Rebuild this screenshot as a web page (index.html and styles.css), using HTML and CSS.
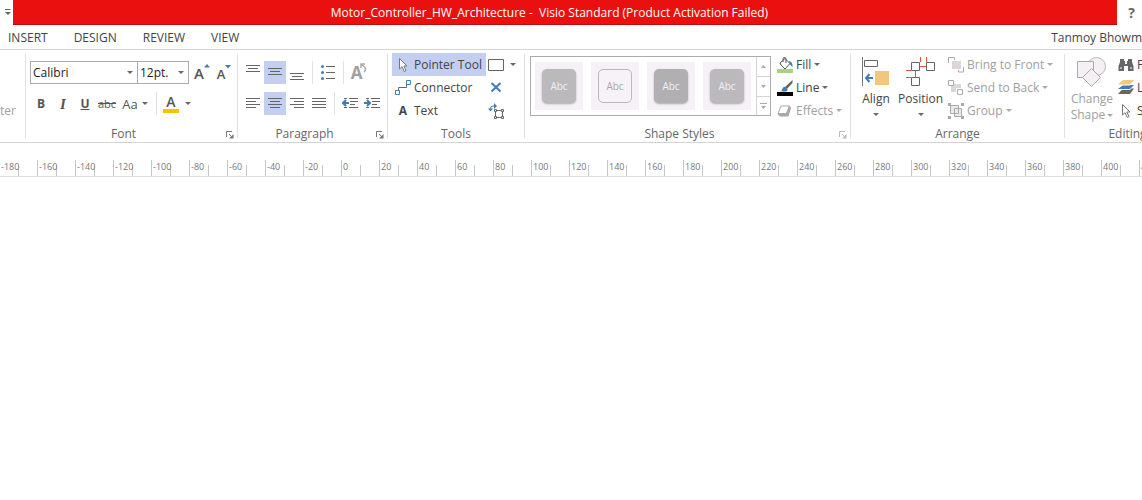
FILE: index.html
```html
<!DOCTYPE html>
<html lang="en">
<head>
<meta charset="utf-8">
<title>Motor_Controller_HW_Architecture - Visio Standard</title>
<link rel="stylesheet" href="styles.css">
</head>
<body>
<header class="titlebar">
  <button class="quick" aria-label="Customize Quick Access Toolbar"><svg width="6" height="7" viewBox="0 0 6 7"><path d="M0 .5h5.500" stroke="#666"/><path d="M0 3h6L3 6z" fill="#666"/></svg></button>
  <h1 class="title">Motor_Controller_HW_Architecture - &nbsp;Visio Standard (Product Activation Failed)</h1>
  <button class="help" aria-label="Help">?</button>
</header>
<nav class="tabs">
  <a href="#insert">INSERT</a><a href="#design">DESIGN</a><a href="#review">REVIEW</a><a href="#view">VIEW</a>
  <span class="user">Tanmoy Bhowm</span>
</nav>
<main>
<div class="ribbon">
  <section class="group clipboard"><button class="painter" disabled>ter</button></section>

  <section class="group font">
    <div class="rows">
      <div class="row">
        <span class="combo family"><select aria-label="Font"><option>Calibri</option></select></span>
        <span class="combo size"><select aria-label="Font size"><option>12pt.</option></select></span>
        <button class="ico letter" aria-label="Grow font">A<svg class="mark" width="6" height="4" viewBox="0 0 6 4"><path d="M0 3.500L3 0l3 3.500z" fill="#3f7cb8"/></svg></button>
        <button class="ico letter small" aria-label="Shrink font">A<svg class="mark" width="6" height="4" viewBox="0 0 6 4"><path d="M0 0h6L3 3.500z" fill="#3f7cb8"/></svg></button>
      </div>
      <div class="row">
        <button class="ico"><b>B</b></button>
        <button class="ico serif"><i>I</i></button>
        <button class="ico"><u>U</u></button>
        <button class="ico strike"><s>abc</s></button>
        <button class="ico case caret">Aa</button>
        <span class="sep"></span>
        <button class="ico color caret" aria-label="Font color"><span class="swatch">A</span></button>
      </div>
    </div>
    <footer><span>Font</span><button class="launch" aria-label="Font settings"><svg width="8" height="8" viewBox="0 0 8 8"><path d="M.5 6V.5H6M3 3l3 3" fill="none" stroke="#777"/><path d="M7.500 3v4.500H3z" fill="#777"/></svg></button></footer>
  </section>

  <section class="group paragraph">
    <div class="rows">
      <div class="row">
        <button class="ico" aria-label="Align top"><svg width="14" height="17"><path d="M0 1.500h14M2 4.500h10M0 7.500h14" stroke="#666"/></svg></button>
        <button class="ico on" aria-label="Align middle"><svg width="14" height="17"><path d="M0 4.500h14M2 7.500h10M0 10.500h14" stroke="#666"/></svg></button>
        <button class="ico" aria-label="Align bottom"><svg width="14" height="17"><path d="M0 9.500h14M2 12.500h10M0 15.500h14" stroke="#666"/></svg></button>
        <span class="sep"></span>
        <button class="ico" aria-label="Bullets"><svg width="14" height="17"><path d="M5 2.500h9M5 8.500h9M5 14.500h9" stroke="#666"/><g fill="#3f7cb8"><circle cx="1.500" cy="2.500" r="1.500"/><circle cx="1.500" cy="8.500" r="1.500"/><circle cx="1.500" cy="14.500" r="1.500"/></g></svg></button>
        <span class="sep"></span>
        <button class="ico rotate" aria-label="Rotate text" disabled>A<svg width="7" height="10" viewBox="0 0 7 10"><path d="M1 5V1h4M1 1l3 2.500q3 2.500 0 5.500" fill="none" stroke="#aaa" stroke-width="1.500"/></svg></button>
      </div>
      <div class="row">
        <button class="ico" aria-label="Align left"><svg width="14" height="13"><path d="M0 1.500h14M0 4.500h10M0 7.500h14M0 10.500h10" stroke="#666"/></svg></button>
        <button class="ico on" aria-label="Center"><svg width="14" height="13"><path d="M0 1.500h14M2 4.500h10M0 7.500h14M2 10.500h10" stroke="#666"/></svg></button>
        <button class="ico" aria-label="Align right"><svg width="14" height="13"><path d="M0 1.500h14M4 4.500h10M0 7.500h14M4 10.500h10" stroke="#666"/></svg></button>
        <button class="ico" aria-label="Justify"><svg width="14" height="13"><path d="M0 1.500h14M0 4.500h14M0 7.500h14M0 10.500h14" stroke="#666"/></svg></button>
        <span class="sep"></span>
        <button class="ico" aria-label="Decrease indent"><svg width="16" height="13"><path d="M2 1.500h3m2 0h9M8 4.500h8M8 7.500h5M2 10.500h3m2 0h9" stroke="#666"/><path d="M7 6H2M4 3L1 6l3 3" fill="none" stroke="#3f7cb8" stroke-width="2"/></svg></button>
        <button class="ico" aria-label="Increase indent"><svg width="16" height="13"><path d="M2 1.500h3m2 0h9M8 4.500h8M8 7.500h5M2 10.500h3m2 0h9" stroke="#666"/><path d="M0 6h5M3 3l3 3-3 3" fill="none" stroke="#3f7cb8" stroke-width="2"/></svg></button>
      </div>
    </div>
    <footer><span>Paragraph</span><button class="launch" aria-label="Paragraph settings"><svg width="8" height="8" viewBox="0 0 8 8"><path d="M.5 6V.5H6M3 3l3 3" fill="none" stroke="#777"/><path d="M7.500 3v4.500H3z" fill="#777"/></svg></button></footer>
  </section>

  <section class="group tools">
    <div class="cols">
      <div class="stack main">
        <button class="cmd on"><svg width="16" height="16"><path d="M4.500 1.500v10.500l2.500-2.300 2.200 4.800 1.800-.9-2.200-4.600h3.200z" fill="#fff" stroke="#777"/></svg>Pointer Tool</button>
        <button class="cmd"><svg width="16" height="16"><path d="M3.500 10V7.500h8V4" fill="none" stroke="#666"/><path d="M.5 10.500h4v4h-4zM11.500.5h4v4h-4z" fill="#fff" stroke="#3f7cb8"/></svg>Connector</button>
        <button class="cmd"><span class="textglyph">A</span>Text</button>
      </div>
      <div class="stack side">
        <button class="cmd caret" aria-label="Rectangle"><svg width="17" height="16"><path d="M.5 2.500h15v11H.5z" fill="#fff" stroke="#666"/></svg></button>
        <button class="cmd" aria-label="Connection point"><svg width="16" height="16"><path d="M3.500 3l9 8.500M12.500 3l-9 8.500" stroke="#3f7cb8" stroke-width="2"/></svg></button>
        <button class="cmd" aria-label="Text block"><svg width="17" height="16"><path d="M2.500 7V5.500q0-2.500 2.500-2.500h2" fill="none" stroke="#3f7cb8"/><path d="M6 0l3 3-3 3zM0 5.500h5L2.500 8.500z" fill="#3f7cb8"/><path d="M7.500 7.500h7v7h-7z" fill="none" stroke="#666"/><path d="M6.500 6.500h2v2h-2zM13.500 6.500h2v2h-2zM6.500 13.500h2v2h-2zM13.500 13.500h2v2h-2z" fill="#fff" stroke="#666"/></svg></button>
      </div>
    </div>
    <footer><span>Tools</span></footer>
  </section>

  <section class="group styles">
    <div class="cols">
      <div class="gallery">
        <button class="tile"><span class="shape">Abc</span></button>
        <button class="tile"><span class="shape outline">Abc</span></button>
        <button class="tile"><span class="shape dark">Abc</span></button>
        <button class="tile"><span class="shape">Abc</span></button>
        <div class="scroller">
          <button aria-label="Previous row"><svg width="5" height="3"><path d="M0 3L2.500 0 5 3z" fill="#aaa"/></svg></button>
          <button aria-label="Next row"><svg width="5" height="3"><path d="M0 0h5L2.500 3z" fill="#aaa"/></svg></button>
          <button aria-label="More styles"><svg width="7" height="6"><path d="M0 .5h7" stroke="#aaa"/><path d="M1 3h5L3.500 6z" fill="#aaa"/></svg></button>
        </div>
      </div>
      <div class="stack">
        <button class="cmd caret"><svg width="16" height="16"><path d="M0 12h16v4H0z" fill="#a9d18e"/><path d="M3 6l5-4.500 5 5L8 12 4 8z" fill="#fff" stroke="#555"/><path d="M6 5V1.500q0-1 1.500-1T9 2v4" fill="none" stroke="#555"/><path d="M12 4q4 1 3.500 6l-3-3z" fill="#3f7cb8"/></svg>Fill</button>
        <button class="cmd caret"><svg width="16" height="16"><path d="M0 12h16v4H0z"/><path d="M15.500 0v3L10 9 8 7z" fill="#666"/><path d="M3 11.500q2-.5 2.500-3 1-2.500 3-1.500l2 2.500q0 2-3 2z" fill="#3f7cb8"/></svg>Line</button>
        <button class="cmd caret" disabled><svg width="16" height="16"><path d="M4 3h8.500L9.500 10.500H1z" fill="#fff" stroke="#aaa" stroke-linejoin="round"/><path d="M12.500 3l1 2.500L11 13l-1.500-2.500zM1 10.500L2.500 13H11L9.500 10.500z" fill="#aaa" stroke="#aaa" stroke-linejoin="round"/></svg>Effects</button>
      </div>
    </div>
    <footer><span>Shape Styles</span><button class="launch" aria-label="Shape settings" disabled><svg width="8" height="8" viewBox="0 0 8 8"><path d="M.5 6V.5H6M3 3l3 3" fill="none" stroke="#bbb"/><path d="M7.500 3v4.500H3z" fill="#bbb"/></svg></button></footer>
  </section>

  <section class="group arrange">
    <div class="cols">
      <button class="big align caret"><svg width="28" height="30"><path d="M.5 0v29" stroke="#777"/><path d="M2.500 3.500h13v6h-13z" fill="#fff" stroke="#666"/><path d="M13 14h14v14H13z" fill="#f0c77c"/><path d="M11 21H4M7.500 17L4 21l3.500 4" fill="none" stroke="#3f7cb8" stroke-width="2"/></svg>Align</button>
      <button class="big position caret"><svg width="30" height="30"><path d="M14.500 0v5M20.500 0v5M0 13.500h5M0 20.500h5M9.500 10v6M14 9.500h6" stroke="#d8573a"/><path d="M5.500 5.500h8v8h-8zM20.500 5.500h8v8h-8zM5.500 20.500h8v8h-8z" fill="#fff" stroke="#666"/><path d="M14 9.500h6M9.500 14v6" stroke="#d8573a"/></svg>Position</button>
      <div class="stack">
        <button class="cmd caret" disabled><svg width="16" height="16"><path d="M4 4h9v8H4z" fill="#dcd5dc"/><path d="M.5 6V.5h6V3M15.500 10v5h-5v-2" fill="none" stroke="#aaa"/></svg>Bring to Front</button>
        <button class="cmd caret" disabled><svg width="16" height="16"><path d="M3 4h5v5H3zM8 4h5v4H8zM3 9h5v3H3z" fill="#dcd5dc"/><path d="M.5.5h5v5h-5zM9.500 9.500h5v5h-5z" fill="#fff" stroke="#aaa"/></svg>Send to Back</button>
        <button class="cmd caret" disabled><svg width="16" height="16"><path d="M2.500 2.500h8v8h-8zM6.500 5.500h7v8h-7z" fill="#eee8ee" stroke="#aaa"/><path d="M0 0h3v3H0zM13 0h3v3h-3zM0 13h3v3H0zM13 13h3v3h-3z" fill="#aaa"/></svg>Group</button>
      </div>
    </div>
    <footer><span>Arrange</span></footer>
  </section>

  <section class="group editing">
    <div class="cols">
      <button class="big change" disabled><svg width="30" height="30"><circle cx="19.500" cy="9.500" r="9" fill="#f4f0f4" stroke="#bbb"/><path d="M.5 4.500h16v16H.5z" fill="#f4f0f4" stroke="#aaa"/><path d="M14.500 11.500l9 9-9 9-9-9z" fill="#f4f0f4" stroke="#aaa"/></svg><span>Change</span><span class="caret">Shape</span></button>
      <div class="stack">
        <button class="cmd"><svg width="16" height="16"><path d="M2 2h4v2h1v3h2V4h1V2h4v3l1.500 4v5H10V9H6v5H.5V9L2 5z" fill="#666"/><path d="M2 11h2M12 11h2" stroke="#fff"/></svg>Find</button>
        <button class="cmd"><svg width="16" height="16"><path d="M5 8.500h11l-4 5.500H0z" fill="#666"/><path d="M5 5h11l-4 5H0z" fill="#fff"/><path d="M5 5h11l-4 4H0z" fill="#3f7cb8"/><path d="M5 .5h11l-4 5H0z" fill="#fff"/><path d="M5 0h11l-4 4.500H0z" fill="#f0c77c"/></svg>Layers</button>
        <button class="cmd"><svg width="16" height="16"><path d="M4.500 1.500v10.500l2.500-2.300 2.200 4.800 1.800-.9-2.200-4.600h3.200z" fill="#fff" stroke="#777"/></svg>Select</button>
      </div>
    </div>
    <footer><span>Editing</span></footer>
  </section>
</div>
<div class="ruler" aria-label="Horizontal ruler">
  <span>-180</span><span>-160</span><span>-140</span><span>-120</span><span>-100</span><span>-80</span><span>-60</span><span>-40</span><span>-20</span><span>0</span><span>20</span><span>40</span><span>60</span><span>80</span><span>100</span><span>120</span><span>140</span><span>160</span><span>180</span><span>200</span><span>220</span><span>240</span><span>260</span><span>280</span><span>300</span><span>320</span><span>340</span><span>360</span><span>380</span><span>400</span><span>420</span>
</div>
</main>
</body>
</html>
```
FILE: styles.css
```css
* { box-sizing: border-box; }
body {
  margin: 0;
  background: #fff;
  color: #444;
  font: 12px/16px "Open Sans", "Noto Sans", sans-serif;
  overflow-x: hidden;
}
button {
  display: flex;
  align-items: center;
  justify-content: center;
  margin: 0;
  padding: 0;
  border: 0;
  background: none;
  color: inherit;
  font: inherit;
  white-space: nowrap;
}
button:disabled { color: #a0a0a0; }
svg { flex: none; display: block; }

.titlebar { display: flex; height: 25px; }
.quick { width: 13px; padding-left: 2px; }
.title {
  flex: 1;
  margin: 0;
  border-bottom: 1px solid #c00c0c;
  background: #ea1010;
  color: #fff;
  font-size: 12px;
  font-weight: 400;
  line-height: 25px;
  padding-right: 31px;
  text-align: center;
}
.help { width: 25px; padding-left: 4px; color: #666; font-size: 14px; font-weight: 700; }

.tabs {
  display: flex;
  align-items: center;
  gap: 26px;
  height: 25px;
  padding: 2px 0 0 8px;
  border-bottom: 1px solid #d4d4d4;
}
.tabs a { color: #444; text-decoration: none; }
.user { margin-left: auto; white-space: nowrap; }

.ribbon {
  display: flex;
  height: 93px;
  padding: 4px 0;
  border-bottom: 1px solid #d4d4d4;
  overflow: hidden;
}
.group {
  display: flex;
  flex: none;
  flex-direction: column;
  justify-content: space-between;
  border-right: 1px solid #e1e1e1;
}
.group footer { display: flex; align-items: center; height: 16px; margin-bottom: -4px; color: #666; }
.group footer span { flex: 1; text-align: center; }
.launch { width: 8px; margin: 2px 3px 0 5px; }

.clipboard { width: 26px; padding-top: 49px; justify-content: flex-start; align-items: flex-start; }
.font { width: 212px; }
.paragraph { width: 150px; }
.tools { width: 137px; }
.styles { width: 326px; }
.arrange { width: 214px; }
.editing { width: 126px; }

.rows { display: grid; gap: 8px; padding: 7px 4px 0; }
.row { display: flex; }
.ico { width: 22px; height: 23px; color: #555; }
.on { background: #c3cff1; }
.sep { width: 1px; margin: 0 4px; background: #e1e1e1; }

.combo { display: flex; align-items: center; position: relative; height: 23px; border: 1px solid #ababab; }
.combo select {
  appearance: none;
  width: 100%;
  padding: 0 2px;
  border: 0;
  background: none;
  color: #222;
  font: inherit;
}
.family { width: 108px; }
.size { width: 52px; margin-left: -1px; }
.caret::after, .combo::after {
  content: "";
  border: 3px solid transparent;
  border-top-color: #666;
  border-bottom: 0;
}
.caret:disabled::after, :disabled .caret::after { border-top-color: #aaa; }
.combo::after { position: absolute; right: 4px; }
.letter { align-items: flex-start; padding-top: 4px; margin-left: 2px; font-size: 15px; font-weight: 600; }
.letter + .letter { margin-left: 0; }
.letter.small { font-size: 13px; padding-top: 5px; }
.letter .mark { margin-top: -1px; }
.serif { font-family: "Liberation Serif", serif; font-size: 15px; font-weight: 700; }
.ico u { font-weight: 700; }
.strike { font-size: 11px; }
.case { width: 34px; gap: 4px; font-size: 13px; }
.color { width: 32px; gap: 6px; }
.swatch { width: 16px; border-bottom: 4px solid #ffc000; font-size: 14px; font-weight: 600; line-height: 14px; }
.rotate { align-items: flex-start; font-size: 17px; font-weight: 700; line-height: 23px; }
.rotate svg { margin: 2px 0 0 -2px; }

.cols { display: flex; }
.stack { display: flex; flex-direction: column; align-items: flex-start; margin-top: -1px; }
.cmd { height: 23px; gap: 3px; }
.main { padding-left: 4px; }
.main .cmd { padding: 0 4px 0 3px; }
.textglyph { width: 16px; font-weight: 700; }
.side { padding-left: 2px; }
.side .caret { gap: 5px; }

.gallery { display: flex; gap: 8px; height: 60px; margin: 2px 6px 0 5px; padding-left: 4px; border: 1px solid #ababab; align-items: center; }
.tile { width: 48px; height: 48px; background: #f5f1f7; }
.shape {
  width: 34px;
  height: 34px;
  border-radius: 5px;
  background: #bbb9bc;
  box-shadow: 0 1px 2px #aaa;
  color: #f2eff3;
  font-size: 10px;
  line-height: 34px;
}
.outline { border: 1px solid #bbb8bc; background: #f6f2f7; box-shadow: none; color: #aaa7ab; line-height: 32px; }
.dark { background: #b1afb2; }
.scroller { display: grid; align-self: stretch; width: 14px; margin-left: -3px; border-left: 1px solid #d4d4d4; grid-template-rows: repeat(3, 1fr); }
.scroller button + button { border-top: 1px solid #d4d4d4; }

.big { flex-direction: column; justify-content: flex-start; padding-top: 3px; }
.big svg { margin-bottom: 4px; }
.big.caret::after { margin-top: 6px; }
.align { width: 28px; margin: 0 9px 0 11px; }
.position { width: 43px; margin-right: 6px; }
.change { width: 42px; margin: 0 5px 0 6px; }
.change .caret { display: flex; align-items: center; gap: 2px; }

.ruler {
  display: flex;
  height: 34px;
  margin-left: -1px;
  padding-top: 17px;
  border-bottom: 1px solid #dcdcdc;
  overflow: hidden;
}
.ruler span {
  flex: 0 0 38px;
  padding-left: 1px;
  border-left: 1px solid #c6c6c6;
  background: linear-gradient(#c6c6c6, #c6c6c6) 18px 100% / 1px 11px no-repeat;
  color: #777;
  font-size: 9px;
  line-height: 14px;
}
```
